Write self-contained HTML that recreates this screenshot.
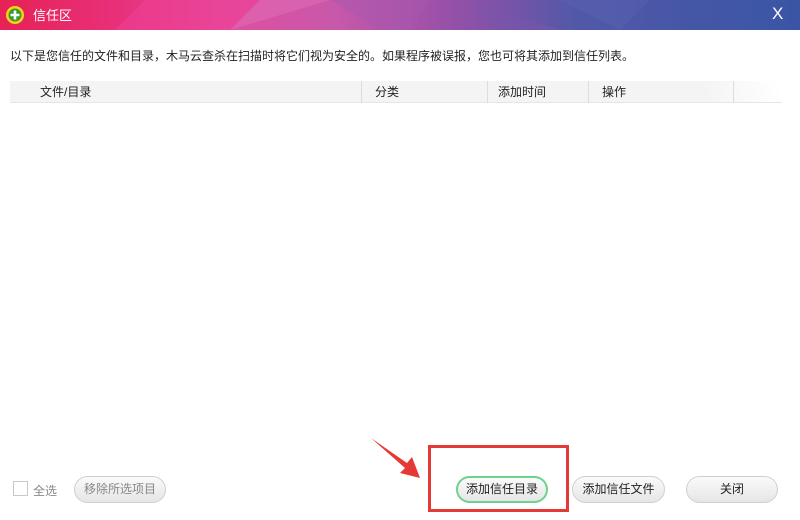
<!DOCTYPE html>
<html><head><meta charset="utf-8"><style>
*{margin:0;padding:0;box-sizing:border-box}
body{width:800px;height:520px;overflow:hidden;background:#fff;font-family:"Liberation Sans","Noto Sans CJK SC",sans-serif;font-size:12px;color:#333;position:relative}
.title{position:absolute;left:0;top:0;width:800px;height:30px;background:linear-gradient(90deg,#e62255 0%,#e8307a 15%,#e04ea0 28%,#c858aa 42%,#9850a8 56%,#5258a8 72%,#3a55a5 100%);overflow:hidden}
.title .t{position:absolute;left:33px;top:5px;color:#fff;font-size:13px}
.btn{position:absolute;height:27px;border:1px solid #cfcfcf;border-radius:14px;background:linear-gradient(#fafafa,#e6e6e6);text-align:center;line-height:25px;font-size:12px;color:#222}
.th{position:absolute;top:81px;height:22px;line-height:22px;font-size:12px;color:#222}
.sep{position:absolute;top:81px;width:1px;height:22px;background:#ddd}
</style></head><body>
<div class="title">
<svg width="800" height="30" style="position:absolute;left:0;top:0">
<polygon points="115,30 145,0 260,0 230,30" fill="#ee3f94" opacity=".6"/>
<polygon points="230,30 260,0 330,0" fill="#e070b8" opacity=".5"/>
<polygon points="330,0 430,0 410,30 380,30" fill="#a858b0" opacity=".5"/>
<polygon points="470,0 560,30 500,30" fill="#7a55aa" opacity=".5"/>
<polygon points="560,0 650,0 620,30" fill="#5a60b0" opacity=".5"/>
</svg>
<svg width="20" height="20" style="position:absolute;left:5px;top:5px" viewBox="0 0 20 20">
<circle cx="10" cy="10" r="9" fill="#f3d21a"/><circle cx="10" cy="10" r="6.5" fill="#3a9a2a"/>
<path d="M10 5.5v9M5.5 10h9" stroke="#fff" stroke-width="2.6"/>
</svg>
<div class="t">信任区</div>
<div style="position:absolute;left:772px;top:4px;color:#fff;font-size:17px">X</div>
</div>
<div style="position:absolute;left:10px;top:47px;font-size:12px;color:#222">以下是您信任的文件和目录，木马云查杀在扫描时将它们视为安全的。如果程序被误报，您也可将其添加到信任列表。</div>
<div style="position:absolute;left:10px;top:81px;width:772px;height:22px;background:linear-gradient(90deg,#f4f4f4 0%,#f4f4f4 90%,#fff 100%);border-bottom:1px solid #e6e6e6"></div>
<div class="th" style="left:40px">文件/目录</div>
<div class="th" style="left:375px">分类</div>
<div class="th" style="left:498px">添加时间</div>
<div class="th" style="left:602px">操作</div>
<div class="sep" style="left:361px"></div>
<div class="sep" style="left:487px"></div>
<div class="sep" style="left:588px"></div>
<div class="sep" style="left:733px"></div>
<div style="position:absolute;left:13px;top:481px;width:15px;height:15px;border:1px solid #c8c8c8;background:#fff"></div>
<div style="position:absolute;left:33px;top:482px;color:#888">全选</div>
<div class="btn" style="left:74px;top:476px;width:92px;color:#888">移除所选项目</div>
<div class="btn" style="left:456px;top:476px;width:92px;border:2px solid #6ed28a;line-height:23px">添加信任目录</div>
<div class="btn" style="left:572px;top:476px;width:93px">添加信任文件</div>
<div class="btn" style="left:686px;top:476px;width:92px">关闭</div>
<div style="position:absolute;left:428px;top:445px;width:141px;height:67px;border:3px solid #e53935"></div>
<svg width="800" height="520" style="position:absolute;left:0;top:0">
<path d="M371 438 L407 463 L412 457 L420 478 L400 473 L405 468 Z" fill="#e53935"/>
</svg>
</body></html>
